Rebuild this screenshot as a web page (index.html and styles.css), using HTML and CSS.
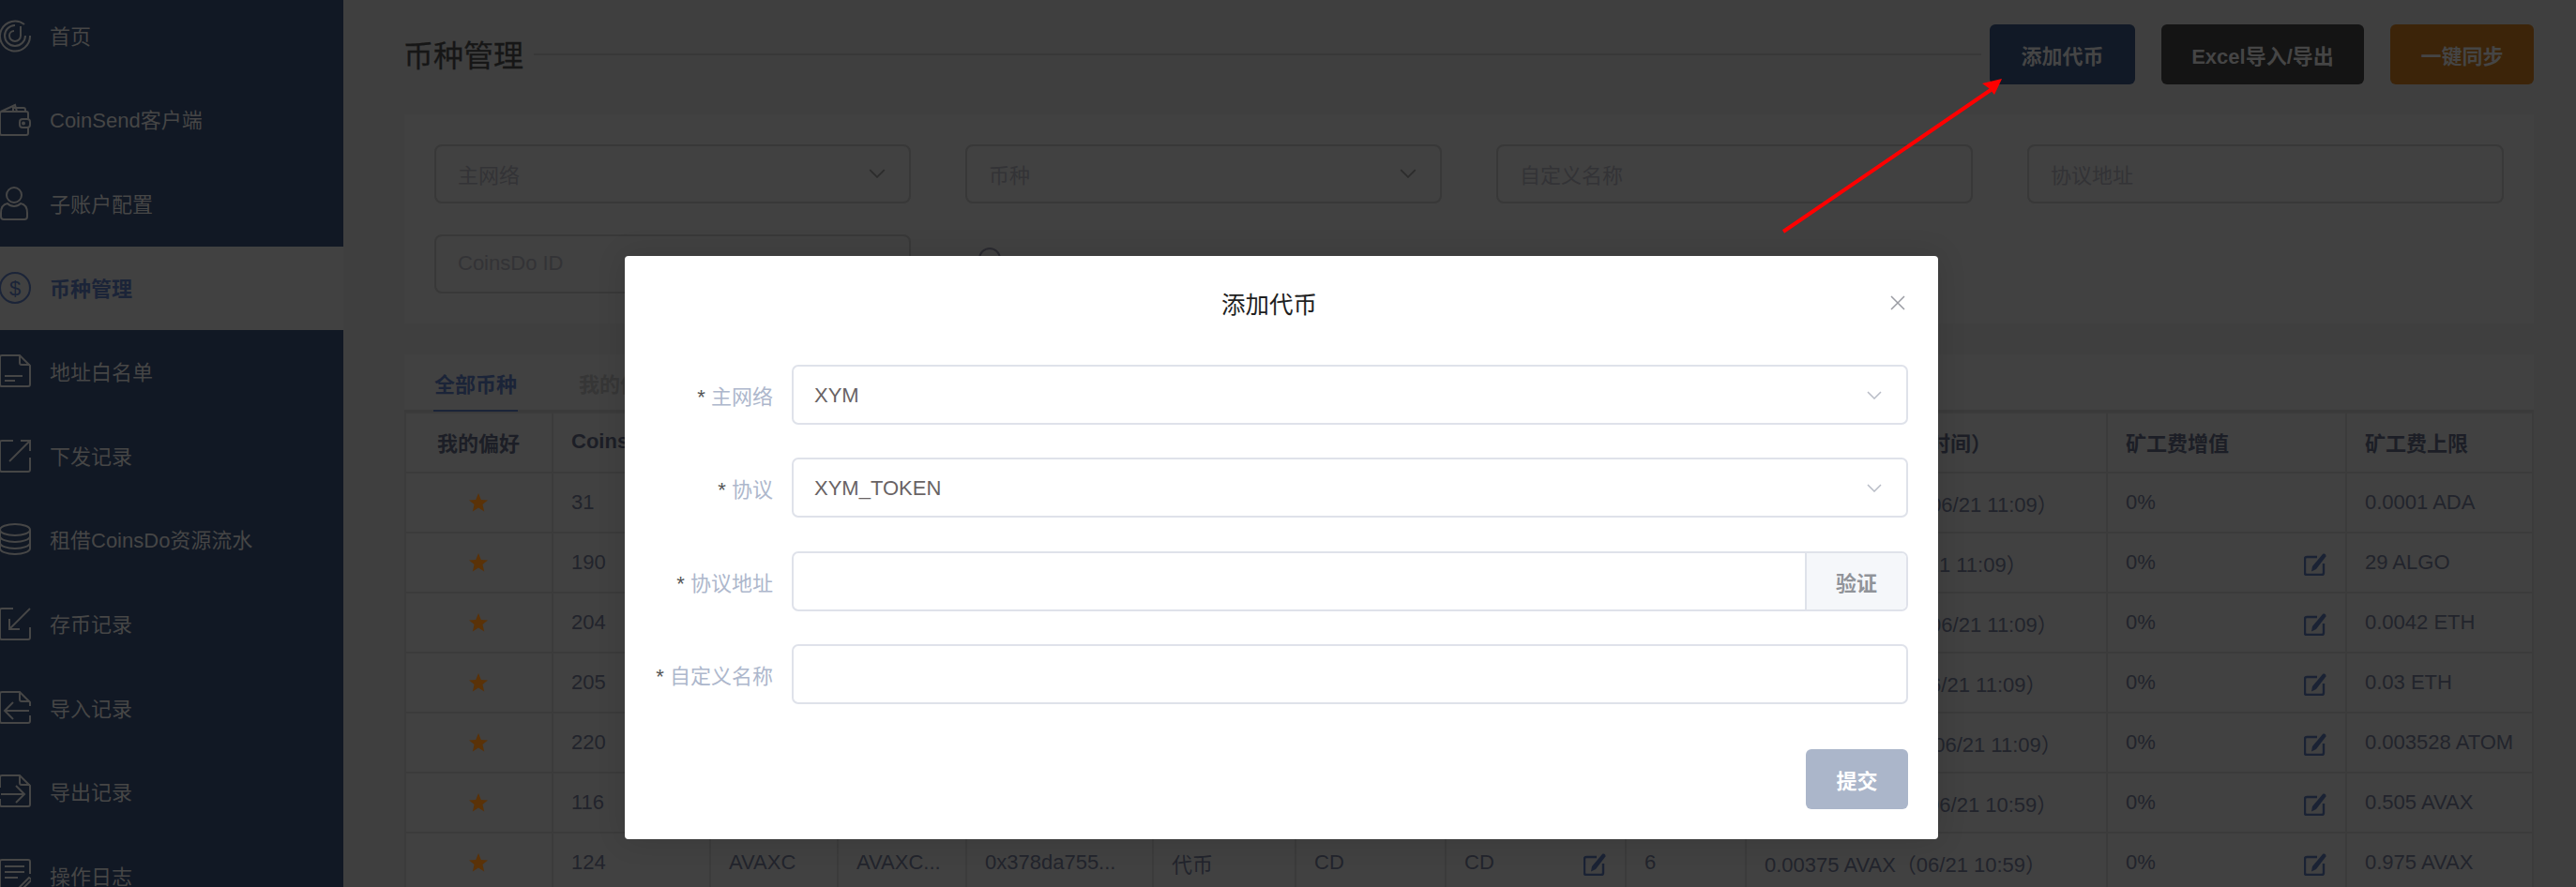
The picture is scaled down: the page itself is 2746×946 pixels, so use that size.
FILE: index.html
```html
<!DOCTYPE html>
<html lang="zh-CN">
<head>
<meta charset="utf-8">
<title>币种管理</title>
<link rel="stylesheet" href="styles.css">
</head>
<body>
<svg class="defs" width="0" height="0" aria-hidden="true">
  <symbol id="star" viewBox="0 0 18 18"><path d="M9 0l2.500 6.200 6.500.5-5 4.200 1.600 6.600L9 14l-5.600 3.500L5 10.900 0 6.700l6.500-.5z"/></symbol>
  <symbol id="edit" viewBox="0 0 24 24"><path class="edit-box" d="M14 4H3a2 2 0 0 0-2 2v15a2 2 0 0 0 2 2h16a2 2 0 0 0 2-2V11"/><path class="edit-pen" d="M20 1c2-1.300 4 .6 3.400 2.600L13 17l-5 2.500 1-5.500z"/></symbol>
  <symbol id="chev" viewBox="0 0 16 9"><path d="M1 1l7 7 7-7"/></symbol>
</svg>

<div class="app">
  <nav class="sidebar">
    <ul class="menu">
      <li class="menu-item">
        <svg class="mi" viewBox="0 0 34 36"><path d="M27 6A16 16 0 1 0 33 18"/><path d="M17 7A11 11 0 1 0 28 18"/><path d="M23 8V18A6 6 0 1 1 11 18 5 5 0 0 1 16 13"/></svg>
        <span>首页</span>
      </li>
      <li class="menu-item">
        <svg class="mi" viewBox="0 0 34 36"><path d="M2 10L17 3l2 7"/><path d="M15 10V6h11a2 2 0 0 1 2 2v2"/><path d="M3 10h26a2 2 0 0 1 2 2v6M31 27v6a2 2 0 0 1-2 2H3a2 2 0 0 1-2-2V12a2 2 0 0 1 2-2"/><rect x="22" y="18" width="11" height="9" rx="3"/><circle cx="26" cy="22.500" r="1"/></svg>
        <span>CoinSend客户端</span>
      </li>
      <li class="menu-item">
        <svg class="mi" viewBox="0 0 34 36"><circle cx="16" cy="9" r="8"/><path d="M9 18C4 19 2 23 2 28v4a3 3 0 0 0 3 3h22a3 3 0 0 0 3-3v-4c0-5-2-9-7-10-2 2-5 3-7 3s-5-1-7-3z"/></svg>
        <span>子账户配置</span>
      </li>
      <li class="menu-item active">
        <svg class="mi" viewBox="0 0 34 36"><circle cx="17" cy="18" r="16"/><text class="dollar" x="17" y="26" text-anchor="middle">$</text></svg>
        <span>币种管理</span>
      </li>
      <li class="menu-item">
        <svg class="mi" viewBox="0 0 34 36"><path d="M22 1H3a2 2 0 0 0-2 2v29a2 2 0 0 0 2 2h28a2 2 0 0 0 2-2V12z"/><path d="M22 1v8a2 2 0 0 0 2 2h9"/><path d="M6 23h19M6 28h11"/></svg>
        <span>地址白名单</span>
      </li>
      <li class="menu-item">
        <svg class="mi" viewBox="0 0 34 36"><path d="M15 2H3a2 2 0 0 0-2 2v29a2 2 0 0 0 2 2h28a2 2 0 0 0 2-2V20"/><path d="M11 24L33 2"/><path d="M23 2h10v11"/></svg>
        <span>下发记录</span>
      </li>
      <li class="menu-item">
        <svg class="mi" viewBox="0 0 34 36"><ellipse cx="17" cy="8" rx="16" ry="6"/><path d="M1 8v20c0 3 7 6 16 6s16-3 16-6V8"/><path d="M1 15c0 3 7 6 16 6s16-3 16-6M1 22c0 3 7 6 16 6s16-3 16-6"/></svg>
        <span>租借CoinsDo资源流水</span>
      </li>
      <li class="menu-item">
        <svg class="mi" viewBox="0 0 34 36"><path d="M15 2H3a2 2 0 0 0-2 2v29a2 2 0 0 0 2 2h28a2 2 0 0 0 2-2V22"/><path d="M33 2L11 24"/><path d="M11 13v11h11"/></svg>
        <span>存币记录</span>
      </li>
      <li class="menu-item">
        <svg class="mi" viewBox="0 0 34 36"><path d="M1 15V3a2 2 0 0 1 2-2h19l11 11v4M33 26v6a2 2 0 0 1-2 2H3a2 2 0 0 1-2-2V15"/><path d="M22 1v8a2 2 0 0 0 2 2h9"/><path d="M32 21H7M15 12l-9 9 9 9"/></svg>
        <span>导入记录</span>
      </li>
      <li class="menu-item">
        <svg class="mi" viewBox="0 0 34 36"><path d="M1 14V3a2 2 0 0 1 2-2h19l11 11v20a2 2 0 0 1-2 2H3a2 2 0 0 1-2-2v-6"/><path d="M22 1v8a2 2 0 0 0 2 2h9"/><path d="M2 21h25M18 12l9 9-9 9"/></svg>
        <span>导出记录</span>
      </li>
      <li class="menu-item">
        <svg class="mi" viewBox="0 0 34 36"><path d="M33 16V3a2 2 0 0 0-2-2H3a2 2 0 0 0-2 2v29a2 2 0 0 0 2 2h13"/><path d="M6 8h21M6 14h21M6 20h14"/><path d="M32 20L19 33l-1 3 4-1 13-13z"/></svg>
        <span>操作日志</span>
      </li>
    </ul>
  </nav>

  <main class="main">
    <header class="page-head">
      <h1 class="page-title">币种管理</h1>
      <div class="head-line"></div>
      <button class="btn btn-navy">添加代币</button>
      <button class="btn btn-black">Excel导入/导出</button>
      <button class="btn btn-orange">一键同步</button>
    </header>

    <section class="card filters">
      <div class="fld fld-select"><span>主网络</span><svg class="chev-dark"><use href="#chev"/></svg></div>
      <div class="fld fld-select"><span>币种</span><svg class="chev-dark"><use href="#chev"/></svg></div>
      <div class="fld"><span>自定义名称</span></div>
      <div class="fld"><span>协议地址</span></div>
      <div class="fld"><span>CoinsDo ID</span></div>
      <div class="radio-wrap"><span class="radio"></span></div>
    </section>

    <section class="card table-card">
      <div class="tabs">
        <div class="tab tab-active">全部币种</div>
        <div class="tab tab-other">我的偏好</div>
      </div>
      <table class="coins">
        <colgroup>
          <col class="c1"><col class="c2"><col class="c3"><col class="c4"><col class="c5"><col class="c6"><col class="c7"><col class="c8"><col class="c9"><col class="c10"><col class="c11"><col class="c12">
        </colgroup>
        <thead>
          <tr><th class="center">我的偏好</th><th>CoinsDo ID</th><th></th><th></th><th></th><th></th><th></th><th></th><th></th><th>当前矿工费（更新时间）</th><th>矿工费增值</th><th>矿工费上限</th></tr>
        </thead>
        <tbody>
          <tr><td class="center"><svg class="star"><use href="#star"/></svg></td><td>31</td><td></td><td></td><td></td><td></td><td></td><td></td><td></td><td>0.0000001 ADA（06/21 11:09）</td><td>0%</td><td>0.0001 ADA</td></tr>
          <tr><td class="center"><svg class="star"><use href="#star"/></svg></td><td>190</td><td></td><td></td><td></td><td></td><td></td><td></td><td></td><td>0.029 ALGO（06/21 11:09）</td><td><div class="split">0%<svg class="edit"><use href="#edit"/></svg></div></td><td>29 ALGO</td></tr>
          <tr><td class="center"><svg class="star"><use href="#star"/></svg></td><td>204</td><td></td><td></td><td></td><td></td><td></td><td></td><td></td><td>0.0000042 ETH（06/21 11:09）</td><td><div class="split">0%<svg class="edit"><use href="#edit"/></svg></div></td><td>0.0042 ETH</td></tr>
          <tr><td class="center"><svg class="star"><use href="#star"/></svg></td><td>205</td><td></td><td></td><td></td><td></td><td></td><td></td><td></td><td>0.000003 ETH（06/21 11:09）</td><td><div class="split">0%<svg class="edit"><use href="#edit"/></svg></div></td><td>0.03 ETH</td></tr>
          <tr><td class="center"><svg class="star"><use href="#star"/></svg></td><td>220</td><td></td><td></td><td></td><td></td><td></td><td></td><td></td><td>0.000352 ATOM（06/21 11:09）</td><td><div class="split">0%<svg class="edit"><use href="#edit"/></svg></div></td><td>0.003528 ATOM</td></tr>
          <tr><td class="center"><svg class="star"><use href="#star"/></svg></td><td>116</td><td></td><td></td><td></td><td></td><td></td><td></td><td></td><td>0.000505 AVAX（06/21 10:59）</td><td><div class="split">0%<svg class="edit"><use href="#edit"/></svg></div></td><td>0.505 AVAX</td></tr>
          <tr><td class="center"><svg class="star"><use href="#star"/></svg></td><td>124</td><td>AVAXC</td><td>AVAXC...</td><td>0x378da755...</td><td>代币</td><td>CD</td><td><div class="split">CD<svg class="edit"><use href="#edit"/></svg></div></td><td>6</td><td>0.00375 AVAX（06/21 10:59）</td><td><div class="split">0%<svg class="edit"><use href="#edit"/></svg></div></td><td>0.975 AVAX</td></tr>
        </tbody>
      </table>
    </section>
  </main>
</div>

<svg class="annot" viewBox="0 0 260 185" aria-hidden="true">
  <path class="annot-line" d="M11 172L232 21"/>
  <polygon class="annot-head" points="244,9 223,14 230,19 236,26"/>
</svg>

<div class="modal" role="dialog">
  <div class="modal-head">
    <h2 class="modal-title">添加代币</h2>
    <svg class="close" viewBox="0 0 16 16"><path d="M1 1l14 14M15 1L1 15"/></svg>
  </div>
  <form class="modal-form">
    <div class="row">
      <label class="lbl"><i>* </i>主网络</label>
      <div class="ctl"><span>XYM</span><svg class="chev-light"><use href="#chev"/></svg></div>
    </div>
    <div class="row">
      <label class="lbl"><i>* </i>协议</label>
      <div class="ctl"><span>XYM_TOKEN</span><svg class="chev-light"><use href="#chev"/></svg></div>
    </div>
    <div class="row">
      <label class="lbl"><i>* </i>协议地址</label>
      <div class="ctl ctl-group"><input class="ctl-input" type="text"><span class="append">验证</span></div>
    </div>
    <div class="row">
      <label class="lbl"><i>* </i>自定义名称</label>
      <div class="ctl ctl-group"><input class="ctl-input" type="text"></div>
    </div>
    <div class="actions"><button type="button" class="submit">提交</button></div>
  </form>
</div>
</body>
</html>
```

FILE: styles.css
```css
* { box-sizing: border-box; }
html, body { margin: 0; height: 100%; overflow: hidden; }
body {
  position: relative;
  background: #3f3f3f;
  color: #22242c;
  font-family: "Liberation Sans", "Noto Sans CJK SC", sans-serif;
  font-size: 22px;
}
.defs { position: absolute; }

.app { display: flex; height: 946px; overflow: hidden; }

/* sidebar */
.sidebar { flex: 0 0 366px; background: #111824; overflow: hidden; }
.menu { list-style: none; margin: -6px 0 0; padding: 0; }
.menu-item {
  display: flex;
  align-items: center;
  gap: 20px;
  height: 89.6px;
  padding-bottom: 2px;
  color: #464646;
  line-height: 22px;
}
.menu-item span { padding-top: 2px; margin-top: 2px; }
.menu-item.active { background: #414141; color: #1b2438; font-weight: 700; }
.mi {
  flex: 0 0 34px;
  width: 34px;
  height: 36px;
  margin-left: -1px;
  fill: none;
  stroke: #464646;
  stroke-width: 2;
  overflow: hidden;
}
.active .mi { stroke: #1b2438; }
.dollar {
  fill: #1b2438;
  stroke: none;
  font-size: 22px;
  font-weight: 400;
}

/* main */
.main { flex: 1 1 auto; min-width: 0; padding: 26px 45px 0 65px; }
.page-head { display: flex; align-items: center; height: 64px; }
.page-title {
  margin: 0 11px 0 -1px;
  padding-bottom: 3px;
  font-size: 32px;
  font-weight: 400;
  color: #161616;
  -webkit-text-stroke: .3px #161616;
}
.head-line { flex: 1 1 auto; height: 2px; margin-right: 9px; background: #383838; }
.btn {
  height: 64px;
  margin-left: 28px;
  border: 0;
  border-radius: 6px;
  color: #454545;
  font: 700 22px "Liberation Sans", "Noto Sans CJK SC", sans-serif;
}
.page-head .head-line + .btn { margin-left: 0; }
.btn-navy { width: 155px; background: #111926; }
.btn-black { width: 216px; background: #141414; }
.btn-orange { width: 153px; background: #3c2409; }

.card { background: #414141; }
.filters {
  display: grid;
  grid-template-columns: repeat(4, 508px);
  gap: 33px 58px;
  padding: 32px;
  margin-top: 32px;
}
.fld {
  display: flex;
  align-items: center;
  justify-content: space-between;
  height: 63px;
  padding: 0 23px 2px;
  border: 2px solid #383838;
  border-radius: 8px;
  color: #333336;
}
.chev-dark { width: 18px; height: 10px; margin-right: 2px; fill: none; stroke: #2c2c2c; stroke-width: 1.500; }
.radio-wrap { padding: 14px 0 0 14px; }
.radio { display: block; width: 24px; height: 24px; border: 2px solid #2a2a30; border-radius: 50%; }

.table-card { margin-top: 33px; }
.tabs { display: flex; gap: 64px; height: 61px; padding-left: 31px; font-weight: 700; color: #363636; border-bottom: 2px solid #3a3a3a; }
.tab { width: 90px; height: 61px; line-height: 66px; text-align: center; white-space: nowrap; }
.tab-active { color: #1b2438; border-bottom: 2px solid #1b2438; }

.coins { width: 2268px; table-layout: fixed; border-collapse: collapse; }
.c1 { width: 157px; } .c2 { width: 168px; } .c3 { width: 136px; } .c4 { width: 137px; }
.c5 { width: 199px; } .c6 { width: 152px; } .c7 { width: 160px; } .c8 { width: 192px; }
.c9 { width: 128px; } .c10 { width: 385px; } .c11 { width: 255px; } .c12 { width: 199px; }
.coins th, .coins td {
  height: 64px;
  padding: 0 20px 0 19px;
  border: 2px solid #3b3b3b;
  text-align: left;
  white-space: nowrap;
  overflow: hidden;
}
.coins th { color: #1c1e26; font-weight: 700; padding-bottom: 3px; }
.coins th.center, .coins td.center { text-align: center; }
.star { display: block; width: 20px; height: 20px; margin: 0 auto; fill: #5a3208; }
.split { display: flex; align-items: center; justify-content: space-between; }
.edit { flex: 0 0 24px; width: 24px; height: 24px; margin-top: 3px; }
.edit-box { fill: none; stroke: #1a2234; stroke-width: 2.400; }
.edit-pen { fill: #1a2234; }

/* red annotation */
.annot { position: absolute; left: 1890px; top: 75px; width: 260px; height: 185px; }
.annot-line { fill: none; stroke: #ff0000; stroke-width: 4; }
.annot-head { fill: #ff0000; }

/* modal */
.modal {
  position: absolute;
  left: 666px;
  top: 273px;
  width: 1400px;
  height: 622px;
  background: #fff;
  border-radius: 4px;
  box-shadow: 0 0 32px rgba(0, 0, 0, .12);
}
.modal-head { display: flex; align-items: center; height: 100px; padding: 0 32px 0 28px; margin-bottom: 16px; }
.modal-title { flex: 1 1 auto; margin: 0; padding-bottom: 2px; text-align: center; font-size: 25.500px; font-weight: 400; color: #1f1f1f; }
.close { flex: 0 0 22px; width: 22px; height: 16px; fill: none; stroke: #9a9ca3; stroke-width: 1.500; }
.modal-form { display: flex; flex-direction: column; gap: 35.330px; padding-right: 32px; }
.row { display: flex; align-items: center; height: 64px; }
.lbl { flex: 0 0 158px; text-align: right; color: #adb7cc; white-space: nowrap; margin-right: 20px; }
.lbl i { font-style: normal; color: #555; }
.ctl {
  flex: 1 1 auto;
  display: flex;
  align-items: center;
  justify-content: space-between;
  height: 64px;
  padding: 2px 26px 0 22px;
  border: 2px solid #dfe2ea;
  border-radius: 7px;
  color: #696364;
}
.chev-light { width: 16px; height: 9px; margin-top: -2px; fill: none; stroke: #b8bcc6; stroke-width: 1.500; }
.ctl-group { padding: 0; overflow: hidden; align-items: stretch; }
.ctl-input { flex: 1 1 auto; min-width: 0; border: 0; outline: 0; background: transparent; padding: 0 22px; font-size: 22px; }
.append {
  flex: 0 0 108px;
  display: flex;
  align-items: center;
  justify-content: center;
  background: #f5f7fa;
  border-left: 2px solid #dfe2ea;
  color: #909399;
  font-weight: 700;
}
.actions { display: flex; justify-content: flex-end; margin-top: 12.700px; }
.submit {
  width: 109px;
  height: 64px;
  border: 0;
  border-radius: 6px;
  background: #abb6ca;
  color: #fff;
  font: 700 22px "Liberation Sans", "Noto Sans CJK SC", sans-serif;
}
```
